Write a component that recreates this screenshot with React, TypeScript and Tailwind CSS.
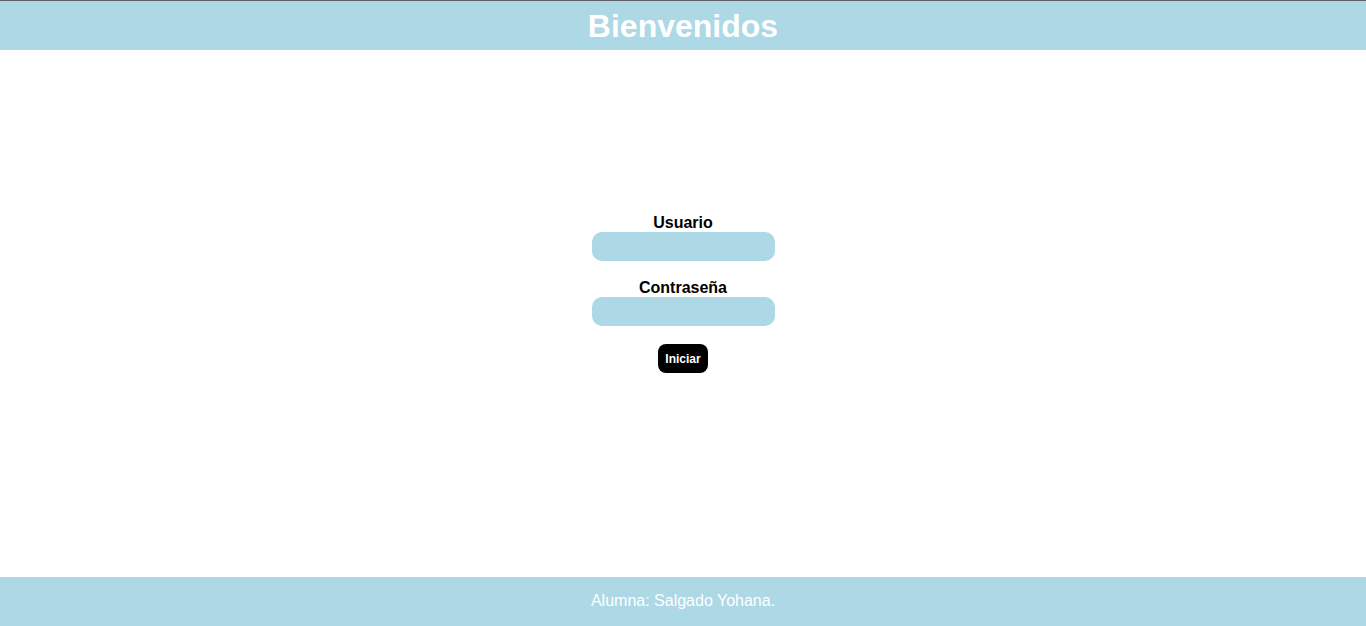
const App = () => {
    return (
        <div className="min-h-screen flex flex-col bg-white font-['Liberation_Sans',Arial,sans-serif]">
            <header className="h-[50px] border-t border-[#5f5f5f] bg-[#add8e6] flex items-center justify-center pt-[2px]">
                <h1 className="text-white font-bold text-[32px] leading-[37px]">Bienvenidos</h1>
            </header>

            <main className="flex-1 flex flex-col items-center pt-[164px]">
                <form className="flex flex-col items-center" onSubmit={(e) => e.preventDefault()}>
                    <label htmlFor="usuario" className="font-bold text-[16px] leading-[18px] text-black">
                        Usuario
                    </label>
                    <input
                        id="usuario"
                        type="text"
                        className="w-[183px] h-[29px] rounded-[10px] bg-[#add8e6] outline-none px-2"
                    />

                    <label htmlFor="clave" className="mt-[18px] font-bold text-[16px] leading-[18px] text-black">
                        Contraseña
                    </label>
                    <input
                        id="clave"
                        type="password"
                        className="w-[183px] h-[29px] rounded-[10px] bg-[#add8e6] outline-none px-2"
                    />

                    <button
                        type="submit"
                        className="mt-[18px] w-[50px] h-[29px] rounded-[8px] bg-black text-white font-bold text-[12px]"
                    >
                        Iniciar
                    </button>
                </form>
            </main>

            <footer className="h-[49px] bg-[#add8e6] flex items-center justify-center pb-[2px]">
                <p className="text-white text-[16px]">Alumna: Salgado Yohana.</p>
            </footer>
        </div>
    )
}

export default App
